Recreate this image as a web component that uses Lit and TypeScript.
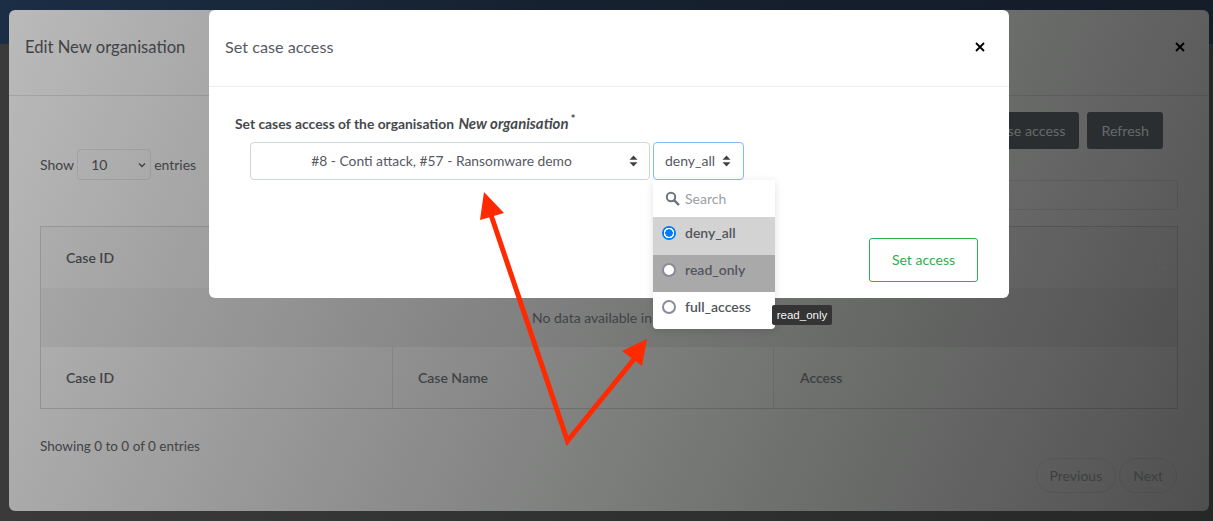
import { LitElement, html, css } from "lit";
import { customElement } from "lit/decorators.js";

const OPTIONS = [
  { label: "deny_all", cls: "selected", checked: true },
  { label: "read_only", cls: "hovered", checked: false },
  { label: "full_access", cls: "", checked: false },
];

@customElement("app-root")
export class AppRoot extends LitElement {
  static styles = css`
    :host {
      display: block;
      width: 1213px;
      height: 521px;
      overflow: hidden;
      font-family: Lato, "Noto Sans", sans-serif;
      font-size: 14px;
      color: #414346;
    }

    .page {
      position: relative;
      box-sizing: border-box;
      width: 1213px;
      height: 521px;
      padding: 10px 4px 10px 9px;
      background: linear-gradient(90deg, #1b2e45 0, #16212f 45%, #141d28 100%) top / 100% 44px no-repeat,
        linear-gradient(90deg, #3a3a3a, #262828);
    }

    /* modal sitting behind the backdrop */
    .back {
      box-sizing: border-box;
      height: 501px;
      border-radius: 6px;
      background: linear-gradient(112deg, #bababa 0%, #8f908f 38%, #6f716f 68%, #4f4f4f 100%);
    }

    .back-head {
      box-sizing: border-box;
      height: 86px;
      padding: 26px 24px 0 16px;
      display: flex;
      justify-content: space-between;
      border-bottom: 1px solid rgba(0, 0, 0, 0.1);
      font-size: 16.6px;
      line-height: 22px;
    }

    .close svg {
      display: block;
      margin-top: 6px;
    }

    .back-body {
      padding: 16px 31px 0;
    }

    .actions {
      display: flex;
      justify-content: flex-end;
      gap: 8px;
      padding-right: 15px;
    }

    .dark-btn {
      box-sizing: border-box;
      height: 37px;
      padding: 0 14px;
      display: flex;
      align-items: center;
      border-radius: 3px;
      background: #2b2e31;
      color: #676a6b;
      font-size: 14.3px;
    }

    .controls {
      display: flex;
      justify-content: space-between;
      align-items: flex-start;
      height: 77px;
    }

    .show {
      display: flex;
      align-items: center;
      gap: 3px;
      height: 31px;
      font-size: 14px;
    }

    .len {
      box-sizing: border-box;
      width: 74px;
      height: 31px;
      padding: 0 4px 0 13px;
      display: flex;
      align-items: center;
      justify-content: space-between;
      border: 1px solid rgba(0, 0, 0, 0.08);
      border-radius: 4px;
      font-size: 14px;
    }

    .search-box {
      box-sizing: border-box;
      width: 358px;
      height: 30px;
      margin-top: 31px;
      border: 1px solid rgba(0, 0, 0, 0.08);
      border-radius: 4px;
    }

    .table {
      display: grid;
      grid-template-columns: 352px 381px 1fr;
      border: 1px solid rgba(0, 0, 0, 0.14);
    }

    .cell {
      box-sizing: border-box;
      padding-left: 25px;
      display: flex;
      align-items: center;
      font-weight: 600;
      font-size: 14px;
      border-right: 1px solid rgba(0, 0, 0, 0.07);
    }

    .cell.last {
      padding-left: 26px;
      border-right: 0;
      color: #3c3e41;
    }

    .head {
      height: 61px;
      background: rgba(0, 0, 0, 0.02);
      position: relative;
    }

    .sort {
      position: absolute;
      right: 8px;
      top: 29px;
      display: block;
    }

    .empty {
      grid-column: 1 / -1;
      height: 59px;
      display: flex;
      align-items: center;
      justify-content: center;
      box-sizing: border-box;
      background: rgba(0, 0, 0, 0.05);
      font-size: 14px;
    }

    .foot {
      height: 61px;
    }

    .info {
      margin-top: 27px;
      line-height: 20px;
      font-size: 13.5px;
    }

    .pager {
      display: flex;
      justify-content: flex-end;
      gap: 3px;
      margin-top: 2px;
      padding-right: 1px;
    }

    .page-btn {
      box-sizing: border-box;
      height: 35px;
      padding: 0 13px;
      display: flex;
      align-items: center;
      border: 1px solid rgba(0, 0, 0, 0.07);
      border-radius: 18px;
      color: #3e4040;
      font-size: 14px;
    }

    /* modal on top */
    .front {
      position: absolute;
      left: 209px;
      top: 10px;
      width: 800px;
      height: 288px;
      border-radius: 6px;
      background: #fff;
    }

    .front-head {
      box-sizing: border-box;
      height: 77px;
      padding: 26px 24px 0 16px;
      display: flex;
      justify-content: space-between;
      border-bottom: 1px solid #ebedf2;
      font-size: 16.2px;
      line-height: 22px;
      color: #575962;
    }

    .front-body {
      padding: 26px 26px 0;
    }

    .label {
      height: 20px;
      line-height: 20px;
      font-weight: 700;
      font-size: 13.85px;
      color: #46494c;
    }

    .label em {
      font-weight: 700;
      font-size: 14.9px;
      margin-left: 1px;
    }

    .label sup {
      margin-left: 2px;
      font-size: 12px;
      line-height: 0;
    }

    .selects {
      display: flex;
      gap: 3px;
      margin: 9px 0 0 15px;
    }

    .select {
      box-sizing: border-box;
      height: 38px;
      padding-bottom: 1px;
      display: flex;
      align-items: center;
      border: 1px solid #cfd5de;
      border-radius: 4px;
      color: #575962;
      font-size: 14px;
    }

    .cases {
      width: 400px;
      padding-left: 12px;
      padding-right: 11px;
    }

    .cases span {
      flex: 1;
      text-align: center;
      padding-right: 9px;
      font-size: 13.85px;
    }

    .level {
      width: 91px;
      padding-left: 11px;
      gap: 7px;
      border-color: #80bdff;
    }

    .submit-row {
      display: flex;
      justify-content: flex-end;
      margin: 58px 5px 0 0;
    }

    .submit {
      box-sizing: border-box;
      width: 109px;
      height: 44px;
      padding-bottom: 1px;
      display: flex;
      align-items: center;
      justify-content: center;
      border: 1px solid #2fae4e;
      border-radius: 3px;
      color: #2fae4e;
      font-size: 14px;
    }

    .menu {
      position: absolute;
      left: 653px;
      top: 180px;
      width: 122px;
      height: 149px;
      border-radius: 0 0 4px 4px;
      background: #fff;
      box-shadow: 0 2px 8px rgba(0, 0, 0, 0.12);
      overflow: hidden;
    }

    .menu-search {
      box-sizing: border-box;
      height: 37px;
      padding-left: 12px;
      display: flex;
      align-items: center;
      gap: 5px;
      color: #9aa0a6;
      font-size: 14px;
    }

    .opt {
      box-sizing: border-box;
      height: 37px;
      padding: 0 0 7px 9px;
      display: flex;
      align-items: center;
      gap: 9px;
      font-weight: 600;
      font-size: 14px;
      color: #52555c;
    }

    .opt span.text {
      margin-bottom: 2px;
    }

    .opt.selected {
      height: 38px;
      background: #d3d3d3;
    }

    .opt.selected span.text {
      margin-bottom: 0;
    }

    .opt.hovered {
      background: #a9a9a9;
    }

    .radio {
      box-sizing: border-box;
      width: 14px;
      height: 14px;
      border: 2px solid #8a8a9a;
      border-radius: 50%;
      background: #fff;
    }

    .radio.on {
      border: 0;
      background: radial-gradient(circle, #007bff 0 3.5px, #fff 4px 5px, #007bff 5.5px);
    }

    .tip {
      position: absolute;
      left: 772px;
      top: 305px;
      width: 60px;
      height: 20px;
      display: flex;
      align-items: center;
      justify-content: center;
      border-radius: 2px;
      background: #343434;
      color: #f2f2f2;
      font-family: "Liberation Sans", sans-serif;
      font-size: 11.5px;
    }

    .arrow {
      position: absolute;
      left: 0;
      top: 0;
      pointer-events: none;
    }
  `;

  private renderX() {
    return html`<svg width="10" height="10" viewBox="0 0 10 10">
      <path d="M1 1l8 8M9 1l-8 8" stroke="#000" stroke-width="1.8" fill="none" />
    </svg>`;
  }

  private renderCaret() {
    return html`<svg width="9" height="12" viewBox="0 0 9 12">
      <path d="M4.5 0.5L8.5 4.8H0.5zM4.5 11.5L0.5 7.2H8.5z" fill="#3f444a" />
    </svg>`;
  }

  render() {
    return html`
      <div class="page">
        <div class="back">
          <div class="back-head">
            <span>Edit New organisation</span>
            <span class="close">${this.renderX()}</span>
          </div>
          <div class="back-body">
            <div class="actions">
              <div class="dark-btn">Set case access</div>
              <div class="dark-btn">Refresh</div>
            </div>
            <div class="controls">
              <div class="show">
                Show
                <div class="len">
                  10
                  <svg width="8" height="6" viewBox="0 0 8 6">
                    <path d="M1 1.5l3 3 3-3" stroke="#3f4244" stroke-width="1.4" fill="none" />
                  </svg>
                </div>
                entries
              </div>
              <div class="search-box"></div>
            </div>
            <div class="table">
              <div class="cell head">Case ID</div>
              <div class="cell head">Case Name</div>
              <div class="cell head last">
                Access
                <svg class="sort" width="14" height="16" viewBox="0 0 14 16">
                  <path
                    d="M4 15V2M1 5l3-3 3 3M10 1v13M7 11l3 3 3-3"
                    stroke="#5b5d5c"
                    stroke-width="1"
                    fill="none"
                  />
                </svg>
              </div>
              <div class="empty">No data available in table</div>
              <div class="cell foot">Case ID</div>
              <div class="cell foot">Case Name</div>
              <div class="cell foot last">Access</div>
            </div>
            <div class="info">Showing 0 to 0 of 0 entries</div>
            <div class="pager">
              <div class="page-btn">Previous</div>
              <div class="page-btn">Next</div>
            </div>
          </div>
        </div>

        <div class="front">
          <div class="front-head">
            <span>Set case access</span>
            <span class="close">${this.renderX()}</span>
          </div>
          <div class="front-body">
            <div class="label">
              Set cases access of the organisation <em>New organisation</em><sup>*</sup>
            </div>
            <div class="selects">
              <div class="select cases">
                <span>#8 - Conti attack, #57 - Ransomware demo</span>
                ${this.renderCaret()}
              </div>
              <div class="select level">deny_all ${this.renderCaret()}</div>
            </div>
            <div class="submit-row">
              <div class="submit">Set access</div>
            </div>
          </div>
        </div>

        <svg class="arrow" width="1213" height="521" viewBox="0 0 1213 521">
          <path d="M490 212L567.5 441L635 358" stroke="#ff2a00" stroke-width="5" fill="none" />
          <path d="M484 192L480 220L504 213z" fill="#ff2a00" />
          <path d="M647 339L622 351L642 366z" fill="#ff2a00" />
        </svg>

        <div class="menu">
          <div class="menu-search">
            <svg width="15" height="15" viewBox="0 0 15 15">
              <circle cx="6" cy="6" r="4.2" stroke="#6c757d" stroke-width="2" fill="none" />
              <path d="M9.3 9.3l4 4" stroke="#6c757d" stroke-width="2.4" stroke-linecap="round" />
            </svg>
            Search
          </div>
          ${OPTIONS.map(
            (o) => html`<div class="opt ${o.cls}">
              <span class="radio ${o.checked ? "on" : ""}"></span><span class="text">${o.label}</span>
            </div>`
          )}
        </div>
        <div class="tip">read_only</div>
      </div>
    `;
  }
}
